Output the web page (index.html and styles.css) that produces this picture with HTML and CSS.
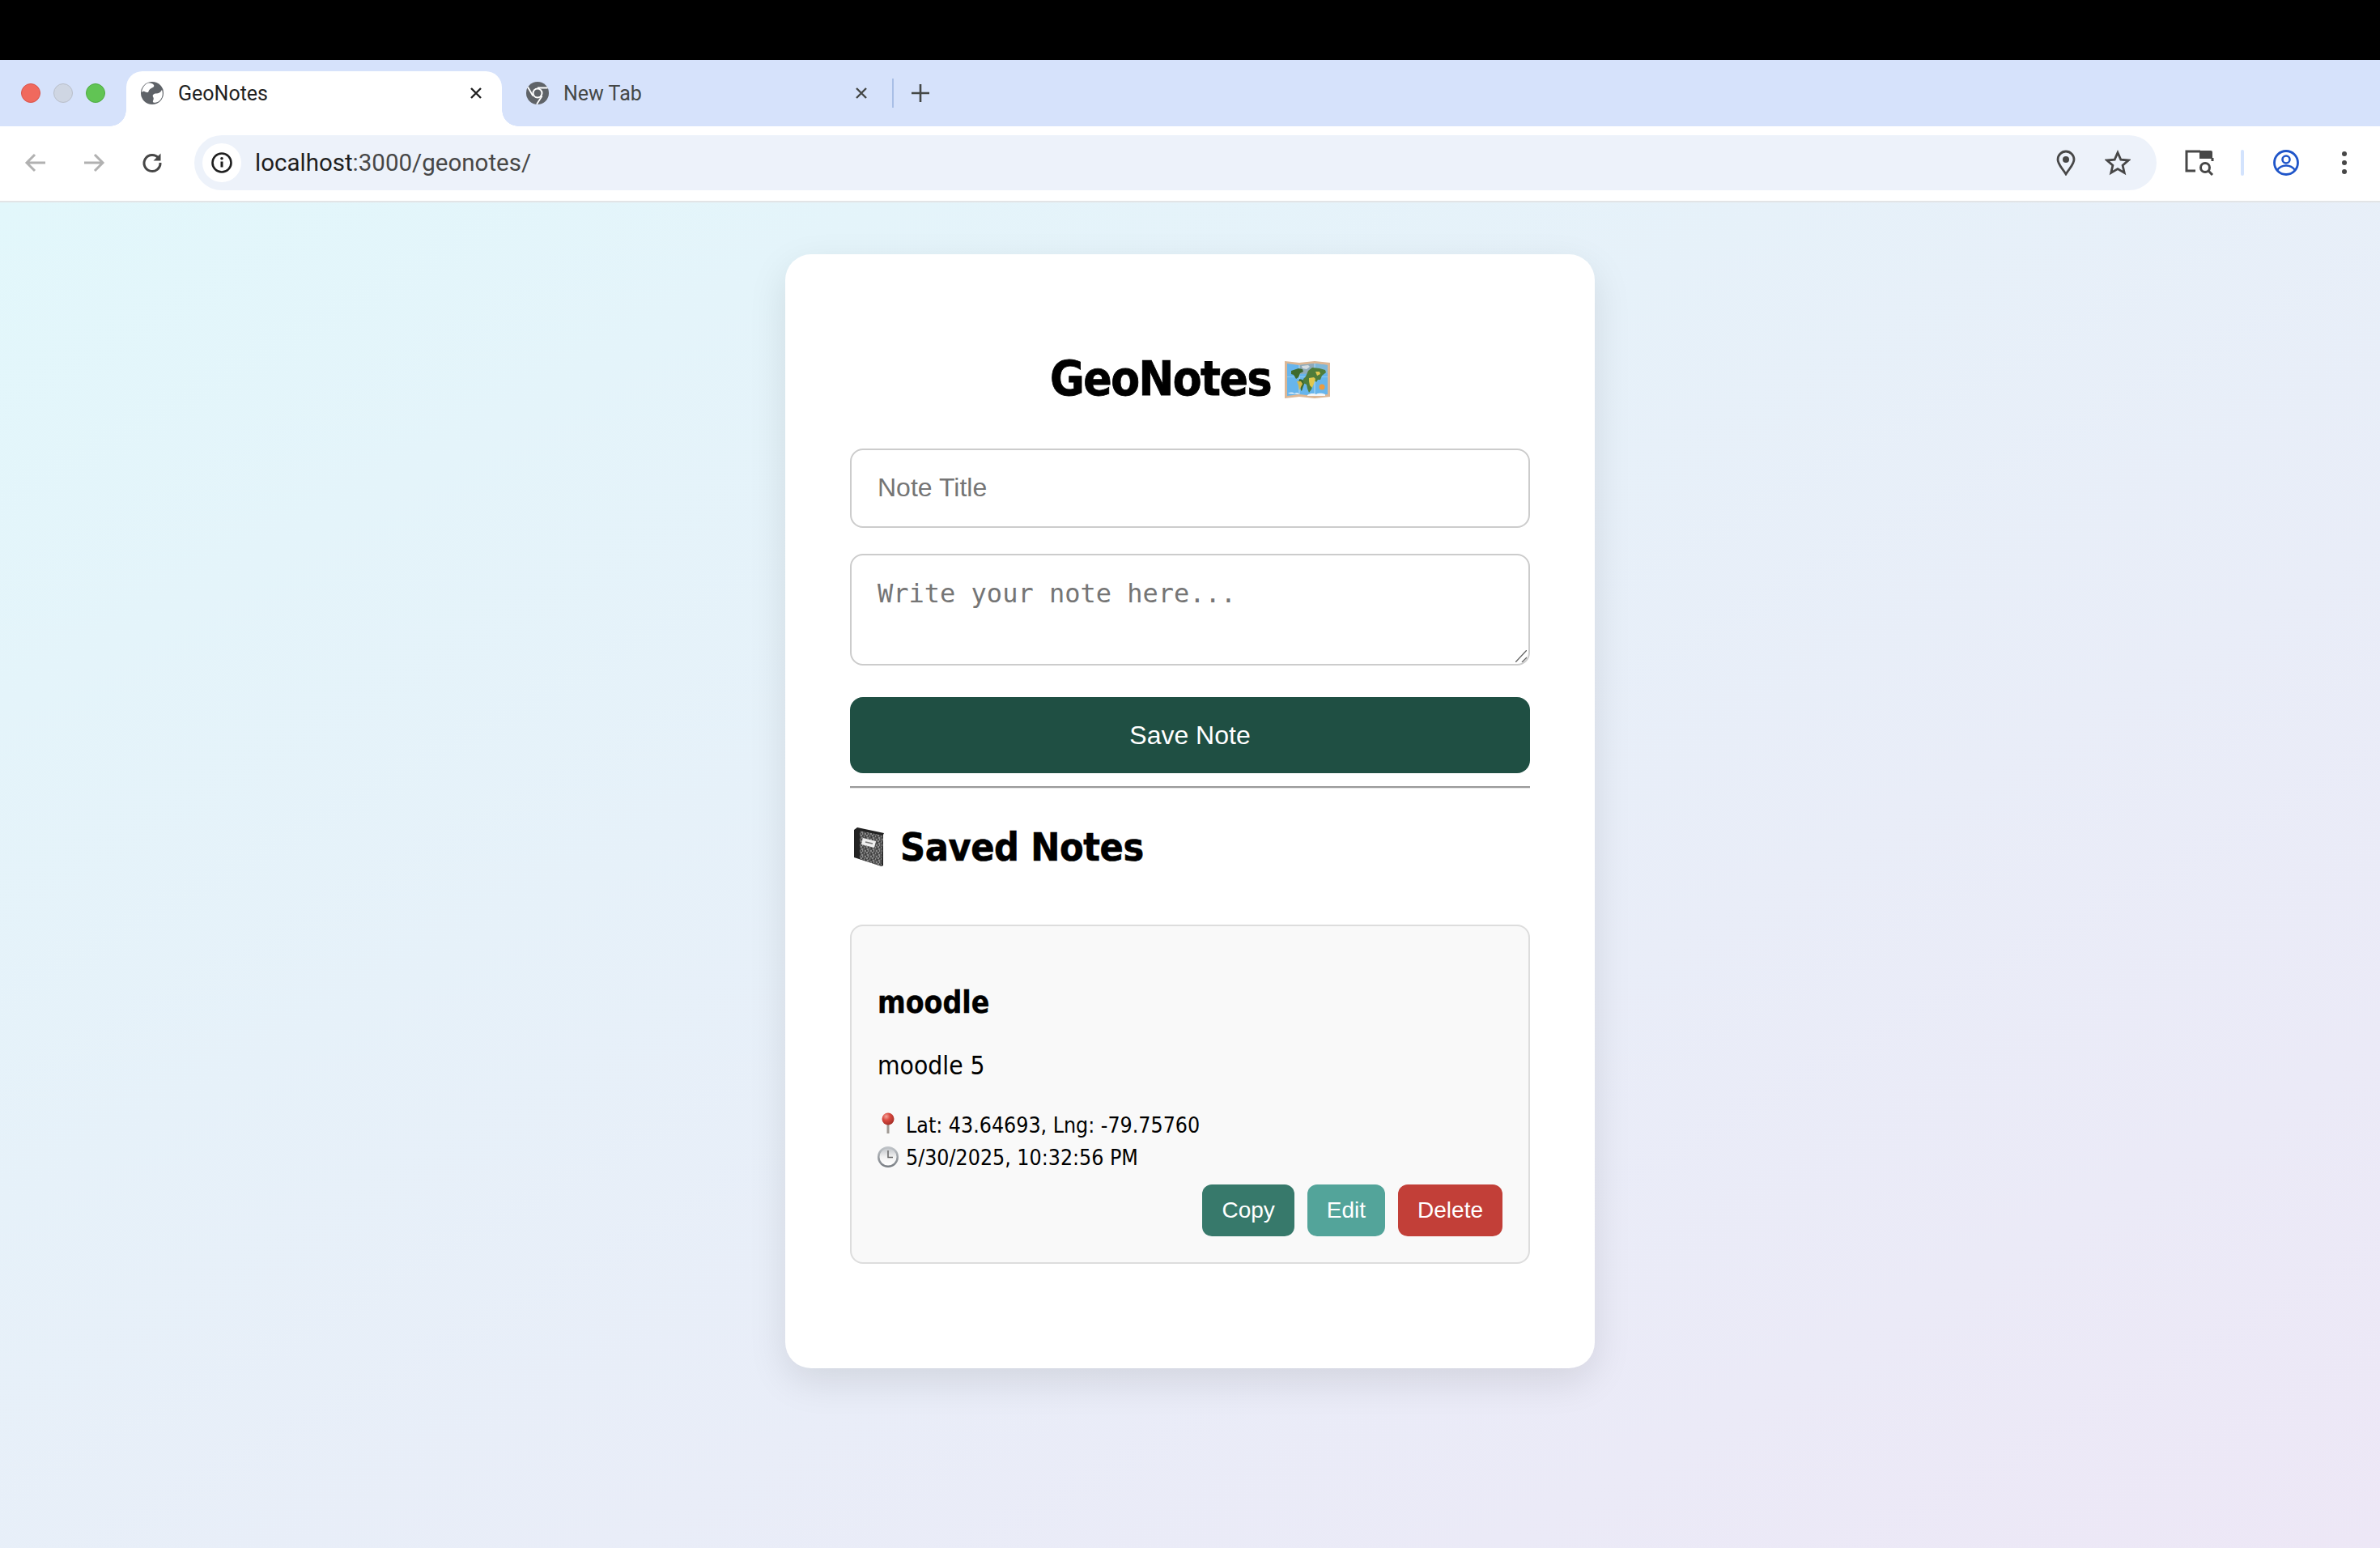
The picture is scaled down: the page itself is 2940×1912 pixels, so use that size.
FILE: index.html
```html
<!DOCTYPE html>
<html lang="en">
<head>
	<meta charset="UTF-8">
	<title>GeoNotes</title>
	<link rel="stylesheet" href="styles.css">
</head>
<body>
	<div class="topbar"></div>
	<div class="tabstrip">
		<div class="lights">
			<span class="light red"></span>
			<span class="light grey"></span>
			<span class="light green"></span>
		</div>
		<div class="tab active">
			<svg class="favicon" viewBox="0 0 28 28"><circle cx="14" cy="14" r="14" fill="#5f6368"/><path d="M9 1.500c3 0 6 .5 7 2.500s-1 3-3 4-3 2-3.500 4-3 1-5 0-3.500 1-3.500 1C1.500 8 4.500 3 9 1.500zM26 10c1.500 4 1 9-2 12.500-1.500 1.500-3 2.500-5 3-2 .5-5 .5-4-2s1-3 0-5 1-4 4-4 5-1 7-4.500z" fill="#fff"/></svg>
			<span class="tab-title">GeoNotes</span>
			<svg class="tab-close" viewBox="0 0 16 16"><path d="M2 2l12 12M14 2L2 14" stroke="#1f1f1f" stroke-width="2.400" fill="none"/></svg>
		</div>
		<div class="tab">
			<svg class="favicon" viewBox="0 0 28 28"><circle cx="14" cy="14" r="14" fill="#5f6368"/><circle cx="14" cy="14" r="6.500" fill="#fff"/><circle cx="14" cy="14" r="4.500" fill="#5f6368"/><path d="M14 7.500h12.500M19.600 17.500L13 27.800M8.400 17.500L2 6.500" stroke="#fff" stroke-width="1.800" fill="none"/></svg>
			<span class="tab-title">New Tab</span>
			<svg class="tab-close" viewBox="0 0 16 16"><path d="M2 2l12 12M14 2L2 14" stroke="#444746" stroke-width="2.400" fill="none"/></svg>
		</div>
		<span class="tab-sep"></span>
		<svg class="new-tab" viewBox="0 0 22 22"><path d="M11 0v22M0 11h22" stroke="#444746" stroke-width="2.600" fill="none"/></svg>
	</div>
	<div class="toolbar">
		<div class="nav">
			<span class="nav-btn"><svg viewBox="0 0 28 28"><path d="M26 14H4M13 4L3 14l10 10" stroke="#b1b1b1" stroke-width="3" fill="none"/></svg></span>
			<span class="nav-btn"><svg viewBox="0 0 28 28"><path d="M2 14h22M15 4l10 10-10 10" stroke="#b1b1b1" stroke-width="3" fill="none"/></svg></span>
			<span class="nav-btn"><svg viewBox="0 0 28 28"><path d="M22 8.500A10 10 0 1 0 24 14" stroke="#474747" stroke-width="3" fill="none"/><path d="M24.500 2.500v9h-9z" fill="#474747"/></svg></span>
		</div>
		<div class="address">
			<span class="site-info"><svg viewBox="0 0 28 28"><circle cx="14" cy="14" r="11.500" stroke="#1f1f1f" stroke-width="2.600" fill="none"/><path d="M14 12.500v7" stroke="#1f1f1f" stroke-width="3" fill="none"/><circle cx="14" cy="8.800" r="1.800" fill="#1f1f1f"/></svg></span>
			<span class="url"><span class="host">localhost</span>:3000/geonotes/</span>
			<svg class="addr-icon" viewBox="0 0 24 32"><path d="M12 30C7 22 2 18 2 12a10 10 0 0 1 20 0c0 6-5 10-10 18z" stroke="#474747" stroke-width="2.800" fill="none"/><circle cx="12" cy="12" r="4" fill="#474747"/></svg>
			<svg class="addr-star" viewBox="0 0 32 32"><path d="M16 3.500l3.800 8.600 9.400.9-7.100 6.200 2.100 9.200-8.200-4.800-8.200 4.800 2.100-9.200L2.800 13l9.400-.9z" stroke="#474747" stroke-width="2.800" fill="none"/></svg>
		</div>
		<div class="tools">
			<svg class="tool-search" viewBox="0 0 36 32"><path d="M13 2H2v24h11" stroke="#474747" stroke-width="3" fill="none"/><path d="M18 1h14a2 2 0 0 1 2 2v8H18z" fill="#474747"/><path d="M13 2h6M34 10v4" stroke="#474747" stroke-width="3" fill="none"/><circle cx="25" cy="22" r="5.500" stroke="#474747" stroke-width="3" fill="none"/><path d="M29 26l5 5" stroke="#474747" stroke-width="3" fill="none"/></svg>
			<span class="tool-sep"></span>
			<svg class="tool-profile" viewBox="0 0 32 32"><circle cx="16" cy="16" r="14.500" stroke="#1f55c9" stroke-width="2.800" fill="none"/><circle cx="16" cy="12" r="4.500" stroke="#1f55c9" stroke-width="2.600" fill="none"/><path d="M5 25c3-4 7-5.500 11-5.500S24 21 27 25" stroke="#1f55c9" stroke-width="2.600" fill="none"/></svg>
			<span class="tool-dots"><i></i><i></i><i></i></span>
		</div>
	</div>
	<div class="page">
		<div class="card">
			<h1 class="title">GeoNotes
				<svg class="emoji-map" viewBox="0 0 56 48">
					<path d="M0 2l18 2 19-2 19 2v42l-19 2-19-2-18 2z" fill="#dcb795"/>
					<path d="M3 5l15 2 19-2 16 2v36l-16 2-19-2-15 2z" fill="#67b5ec"/>
					<path d="M18 7l19-2v12l-19 1z" fill="#8faab9"/>
					<path d="M37 5l16 2v10l-16 0z" fill="#7fb7d8"/>
					<path d="M3 22h50v-1H3z" fill="#8ccaf2"/>
					<path d="M18 7v36M37 5v40" stroke="#9ccdf0" stroke-width="1.500"/>
					<path d="M21 8l8-1 2 2-4 3-5-1z" fill="#d5dde2"/>
					<path d="M8 14l9-3 5 1 1 3-4 2-2 5-3 2-3-5-3-1zM18 24l4 1 3 3-2 5-2 6-1-1-1-6-2-4z" fill="#3f6a2d"/>
					<path d="M15 27l5 0 2 3-3 6-1 2-1-6z" fill="#d5b94b"/>
					<path d="M29 14l5-4 9 1 7 2 1 3-5 4-2 5-3 0-2 3-3-3-2 2 1 4-2 6-3 4-2-5-1-5-4-2 0-5 3-3z" fill="#4f7d3a"/>
					<path d="M30 23l6-1 2 2-2 6-2 5-3-3-1-5zM38 15l5 0 1 3-4 2z" fill="#e1c84f"/>
					<circle cx="46" cy="34" r="3.500" fill="#ee9b3e"/>
					<path d="M4 42c4-2 6-1 8 0 2-1 5-1 6 1zM28 44c4-3 9-2 11-1 3-2 8-1 11 0v2H28z" fill="#f3f6f8"/>
				</svg>
			</h1>
			<input class="field" type="text" placeholder="Note Title">
			<div class="area-wrap">
				<textarea class="field area" placeholder="Write your note here..."></textarea>
				<svg class="grip" viewBox="0 0 14 15"><path d="M0 15L14 0M8 15l6-6" stroke="#666" stroke-width="1.400" fill="none"/></svg>
			</div>
			<button class="save-btn">Save Note</button>
			<hr class="rule">
			<h2 class="saved-head">
				<svg class="emoji-book" viewBox="0 0 40 48">
					<defs>
						<pattern id="speck" width="7" height="7" patternUnits="userSpaceOnUse"><rect width="7" height="7" fill="#555"/><path d="M0 1h2M4 0v2M2 3h2M6 4h1M0 5h1M3 6h2" stroke="#bbb" stroke-width="1"/><path d="M2 1h2M5 3v1M1 4v2" stroke="#1c1c1c" stroke-width="1"/></pattern>
					</defs>
					<path d="M1 3l4-3 33 7-1 2v38l-2 1L1 37z" fill="#222"/>
					<path d="M8 4l29 6-2 38L8 39z" fill="url(#speck)"/>
					<path d="M12 13l16 4-2 8-16-4z" fill="#eee"/>
					<path d="M15 18l9 2" stroke="#777" stroke-width="1.500"/>
				</svg>
				Saved Notes
			</h2>
			<div class="note">
				<h3 class="note-title">moodle</h3>
				<p class="note-body">moodle 5</p>
				<div class="note-meta">
					<div class="meta-line">
						<svg class="emoji-small" viewBox="0 0 26 32">
							<defs>
								<radialGradient id="ball" cx="0.350" cy="0.300" r="0.800"><stop offset="0" stop-color="#f4a69d"/><stop offset="0.400" stop-color="#d9493f"/><stop offset="1" stop-color="#9c2a24"/></radialGradient>
							</defs>
							<path d="M13 14v12" stroke="#a09a94" stroke-width="3"/><circle cx="13" cy="8" r="7.500" fill="url(#ball)"/>
						</svg>
						<span>Lat: 43.64693, Lng: -79.75760</span>
					</div>
					<div class="meta-line">
						<svg class="emoji-small" viewBox="0 0 26 32">
							<defs>
								<linearGradient id="rim" x1="0" y1="0" x2="0" y2="1"><stop offset="0" stop-color="#c2c6ca"/><stop offset="1" stop-color="#777c82"/></linearGradient>
								<linearGradient id="face" x1="0" y1="0" x2="0" y2="1"><stop offset="0" stop-color="#c4c7cb"/><stop offset="0.500" stop-color="#f2f2f2"/><stop offset="1" stop-color="#fff"/></linearGradient>
							</defs>
							<circle cx="13" cy="15" r="13" fill="url(#rim)"/><circle cx="13" cy="15" r="10.500" fill="url(#face)"/><path d="M13 7v8.500h6" stroke="#666" stroke-width="1.500" fill="none"/>
						</svg>
						<span>5/30/2025, 10:32:56 PM</span>
					</div>
				</div>
				<div class="note-actions">
					<button class="act copy">Copy</button>
					<button class="act edit">Edit</button>
					<button class="act del">Delete</button>
				</div>
			</div>
		</div>
	</div>
</body>
</html>
```

FILE: styles.css
```css
*{
	margin: 0;
	padding: 0;
	box-sizing: border-box;
}
body{
	width: 2940px;
	height: 1912px;
	display: flex;
	flex-direction: column;
	overflow: hidden;
	font-family: "DejaVu Sans Condensed", "DejaVu Sans", sans-serif;
	font-stretch: condensed;
	background: #fff;
}
.topbar{
	height: 74px;
	background: #000;
}

/* browser tabs */
.tabstrip{
	height: 82px;
	background: #d6e2fb;
	display: flex;
	align-items: flex-end;
	font-family: Roboto, "Liberation Sans", sans-serif;
	font-stretch: normal;
}
.lights{
	width: 156px;
	height: 68px;
	padding-left: 26px;
	display: flex;
	align-items: center;
	gap: 16px;
	align-self: flex-end;
	padding-bottom: 14px;
}
.light{
	width: 24px;
	height: 24px;
	border-radius: 50%;
}
.red{
	background: #f0695d;
	border: 1px solid #d9534a;
}
.grey{
	background: #cfd6e3;
	border: 1px solid #b9bfca;
}
.green{
	background: #61c454;
	border: 1px solid #4eac41;
}
.tab{
	width: 464px;
	height: 68px;
	padding: 0 24px 14px 18px;
	display: flex;
	align-items: center;
	gap: 18px;
	font-size: 25px;
	color: #444746;
	margin-left: 12px;
}
.tab.active{
	position: relative;
	background: #fff;
	color: #1f1f1f;
	border-radius: 20px 20px 0 0;
	margin-left: 0;
}
.tab.active::before,
.tab.active::after{
	content: "";
	position: absolute;
	bottom: 0;
	width: 20px;
	height: 20px;
	background: radial-gradient(circle at 0 0, #d6e2fb 19.500px, #fff 20px);
}
.tab.active::before{
	left: -20px;
}
.tab.active::after{
	right: -20px;
	background: radial-gradient(circle at 100% 0, #d6e2fb 19.500px, #fff 20px);
}
.favicon{
	width: 28px;
	height: 28px;
	flex: none;
}
.tab-title{
	flex: 1;
}
.tab-close{
	width: 16px;
	height: 16px;
}
.tab-sep{
	width: 2px;
	height: 36px;
	background: #a9bfe6;
	margin: 0 0 23px 6px;
}
.new-tab{
	width: 22px;
	height: 22px;
	margin: 0 0 30px 22px;
}

/* browser toolbar */
.toolbar{
	height: 94px;
	background: #fff;
	border-bottom: 2px solid #e2e4e6;
	border-radius: 22px 22px 0 0;
	display: flex;
	align-items: center;
	padding: 0 0 2px 8px;
	font-family: Roboto, "Liberation Sans", sans-serif;
	font-stretch: normal;
}
.nav{
	display: flex;
	margin-right: 16px;
}
.nav-btn{
	width: 72px;
	display: flex;
	justify-content: center;
}
.nav-btn svg{
	width: 28px;
	height: 28px;
}
.address{
	width: 2424px;
	height: 68px;
	background: #edf2fa;
	border-radius: 34px;
	display: flex;
	align-items: center;
	padding: 0 30px 0 10px;
}
.site-info{
	width: 48px;
	height: 48px;
	background: #fff;
	border-radius: 50%;
	display: flex;
	align-items: center;
	justify-content: center;
}
.site-info svg{
	width: 28px;
	height: 28px;
}
.url{
	margin-left: 17px;
	flex: 1;
	font-size: 29.500px;
	color: #474747;
}
.host{
	color: #1f1f1f;
}
.addr-icon{
	width: 24px;
	height: 32px;
	margin-right: 36px;
}
.addr-star{
	width: 32px;
	height: 32px;
	margin-right: 2px;
}
.tools{
	display: flex;
	align-items: center;
	padding-left: 35px;
}
.tool-search{
	width: 36px;
	height: 32px;
}
.tool-sep{
	width: 4px;
	height: 32px;
	border-radius: 2px;
	background: #d3e3fd;
	margin: 0 36px 0 33px;
}
.tool-profile{
	width: 32px;
	height: 32px;
}
.tool-dots{
	display: flex;
	flex-direction: column;
	gap: 5px;
	margin-left: 53px;
}
.tool-dots i{
	width: 6px;
	height: 6px;
	border-radius: 50%;
	background: #474747;
}

/* page */
.page{
	flex: 1;
	background: linear-gradient(to bottom right, #e2f7fb, #ede7f6);
	padding-top: 64px;
}
.card{
	width: 1000px;
	margin: 0 auto;
	padding: 116px 80px 129px;
	background: #fff;
	border-radius: 32px;
	box-shadow: 0 16px 48px rgba(0, 0, 0, 0.1);
}
.title{
	height: 76px;
	margin-bottom: 48px;
	display: flex;
	align-items: center;
	justify-content: center;
	gap: 17px;
	font-size: 58px;
	letter-spacing: -1.500px;
	-webkit-text-stroke: 0.800px #000;
	line-height: 76px;
	color: #000;
}
.emoji-map{
	width: 56px;
	height: 48px;
}
.field{
	display: block;
	width: 100%;
	height: 98px;
	margin-bottom: 32px;
	padding: 0 32px 2px;
	border: 2px solid #ccc;
	border-radius: 16px;
	background: #fff;
	font-family: "Liberation Sans", sans-serif;
	font-size: 32px;
}
.area-wrap{
	position: relative;
	margin-bottom: 39px;
}
.area{
	height: 138px;
	margin-bottom: 0;
	padding: 28px 32px;
	font-family: "DejaVu Sans Mono", monospace;
	line-height: 38px;
	resize: none;
}
.grip{
	position: absolute;
	right: 4px;
	bottom: 4px;
	width: 14px;
	height: 15px;
}
.save-btn{
	display: block;
	width: 100%;
	height: 94px;
	border: 0;
	border-radius: 16px;
	background: #1f4f43;
	color: #fff;
	font-family: "Liberation Sans", sans-serif;
	font-size: 32px;
}
.rule{
	margin-top: 16px;
	border: 0;
	border-top: 2px solid #9a9a9a;
	border-bottom: 1px solid #e4e4e4;
}
.saved-head{
	height: 64px;
	margin: 40px 0 64px;
	display: flex;
	align-items: center;
	gap: 18px;
	padding-left: 4px;
	font-size: 48px;
	letter-spacing: -0.400px;
	-webkit-text-stroke: 0.600px #000;
	line-height: 64px;
}
.emoji-book{
	width: 40px;
	height: 48px;
}
.note{
	padding: 70px 32px 32px;
	background: #f9f9f9;
	border: 2px solid #ddd;
	border-radius: 16px;
}
.note-title{
	font-size: 37px;
	-webkit-text-stroke: 0.400px #000;
	line-height: 50px;
}
.note-body{
	margin-top: 30px;
	font-size: 31.500px;
	line-height: 44px;
}
.note-meta{
	margin-top: 32px;
	font-size: 26.500px;
	line-height: 40px;
}
.meta-line{
	display: flex;
	align-items: center;
	gap: 9px;
}
.emoji-small{
	width: 26px;
	height: 32px;
}
.note-actions{
	margin-top: 13px;
	display: flex;
	justify-content: flex-end;
	gap: 16px;
}
.act{
	height: 64px;
	padding: 0 24px;
	border: 0;
	border-radius: 12px;
	color: #fff;
	font-family: "Liberation Sans", sans-serif;
	font-size: 28px;
}
.copy{
	background: #37796b;
}
.edit{
	background: #53a49a;
}
.del{
	background: #c23f38;
}
```
